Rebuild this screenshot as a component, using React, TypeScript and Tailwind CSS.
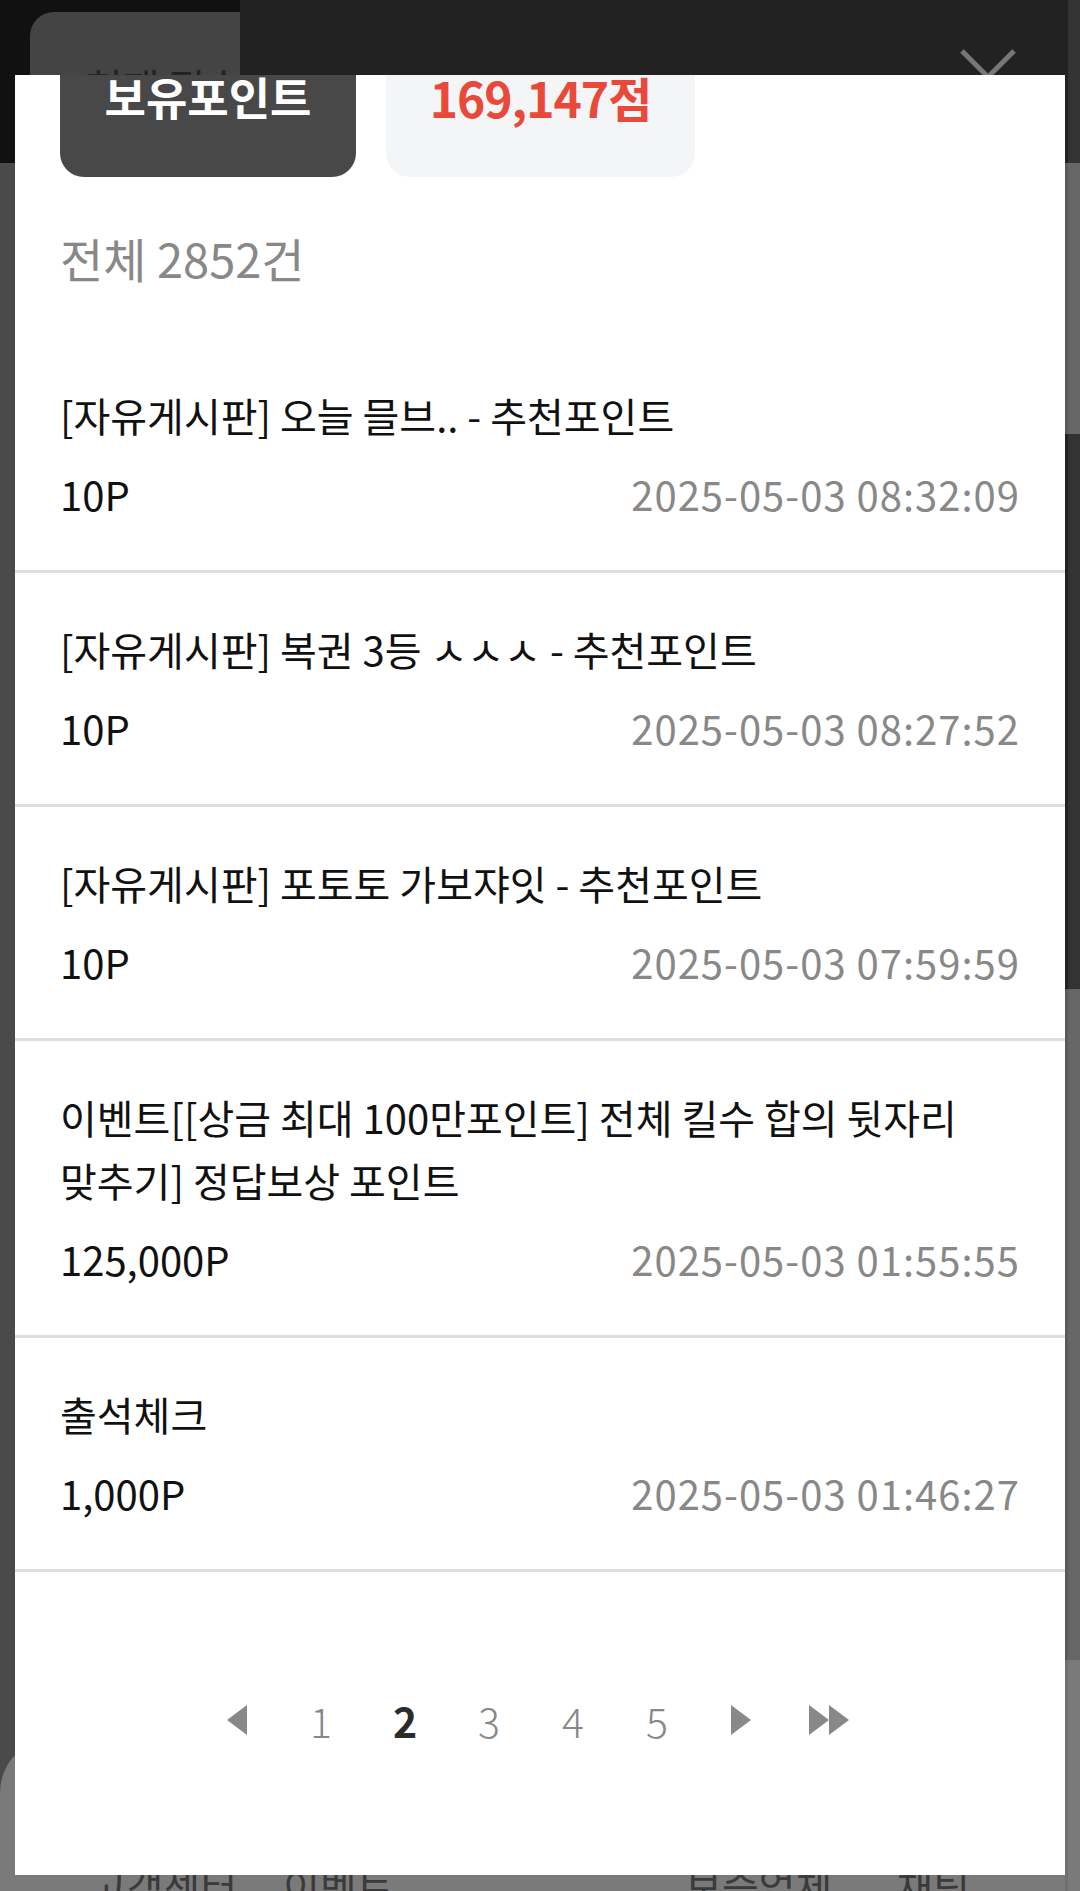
const rows: { title: string; point: string; date: string }[] = [
    {title: '[자유게시판] 오늘 믈브.. - 추천포인트', point: '10P', date: '2025-05-03 08:32:09'},
    {title: '[자유게시판] 복권 3등 ㅅㅅㅅ - 추천포인트', point: '10P', date: '2025-05-03 08:27:52'},
    {title: '[자유게시판] 포토토 가보쟈잇 - 추천포인트', point: '10P', date: '2025-05-03 07:59:59'},
    {title: '이벤트[[상금 최대 100만포인트] 전체 킬수 합의 뒷자리 맞추기] 정답보상 포인트', point: '125,000P', date: '2025-05-03 01:55:55'},
    {title: '출석체크', point: '1,000P', date: '2025-05-03 01:46:27'},
];

function Arrow({dir}: { dir: 'left' | 'right' }) {
    return (
        <svg width="20" height="30" viewBox="0 0 20 30">
            {dir === 'left'
                ? <polygon points="20,0 20,30 0,15" fill="#888"/>
                : <polygon points="0,0 0,30 20,15" fill="#888"/>}
        </svg>
    );
}

function Pagination() {
    return (
        <div className="flex items-center justify-center pr-[10px] h-[60px]">
            <button className="w-[84px] flex justify-center"><Arrow dir="left"/></button>
            {[1, 2, 3, 4, 5].map(n => (
                <button
                    key={n}
                    className={`w-[84px] text-center text-[41px] leading-[60px] ${n === 2 ? 'font-bold text-[#2b2b2b]' : 'font-light text-[#888]'}`}
                >
                    {n}
                </button>
            ))}
            <button className="w-[84px] flex justify-center"><Arrow dir="right"/></button>
            <button className="w-[92px] flex justify-center">
                <Arrow dir="right"/>
                <Arrow dir="right"/>
            </button>
        </div>
    );
}

export default function App() {
    return (
        <div className="relative w-[1080px] h-[1891px] overflow-hidden bg-[#4a4a4a] font-['Noto_Sans_CJK_KR','Noto_Sans',sans-serif]">
            <div className="flex h-full">
                {/* page behind the dialog */}
                <div className="flex-1 flex flex-col">
                    <div className="h-[163px] bg-[#111] pt-[12px] pl-[30px]">
                        <div className="w-[400px] h-[140px] rounded-[24px] bg-[#444] pl-[56px] pt-[44px]">
                            <span className="text-[40px] text-[#222]">현재 접속</span>
                        </div>
                    </div>
                    <div className="flex-1"/>
                    <div className="h-[154px] rounded-t-[56px] bg-[#7a7a7a] flex items-end">
                        <div className="flex w-full text-[40px] leading-[40px] text-[#3a3a3a] translate-y-[14px]">
                            <span className="ml-[90px]">고객센터</span>
                            <span className="ml-[46px]">이벤트</span>
                            <span className="ml-auto">보증업체</span>
                            <span className="ml-[64px] mr-[95px]">채팅</span>
                        </div>
                    </div>
                </div>
                {/* page scrollbar */}
                <div className="w-[15px] flex flex-col">
                    <div className="h-[163px] bg-[#333] border-l-[3px] border-[#222]"/>
                    <div className="h-[271px] bg-[#666] border-l-[3px] border-[#5a5a5a]"/>
                    <div className="h-[555px] bg-[#333] border-l-[3px] border-[#222]"/>
                    <div className="h-[671px] bg-[#666] border-l-[3px] border-[#5a5a5a]"/>
                    <div className="flex-1 bg-[#7a7a7a] border-l-[3px] border-[#707070]"/>
                </div>
            </div>

            {/* header bar over the page */}
            <div className="absolute left-[240px] top-0 w-[825px] h-[75px] bg-[#222]">
                <svg className="absolute left-[718px] top-[47px]" width="60" height="60" viewBox="0 0 60 60">
                    <path d="M4 4 L56 56 M56 4 L4 56" stroke="#777" strokeWidth="5"/>
                </svg>
            </div>

            {/* points dialog */}
            <div className="absolute left-[15px] top-[75px] w-[1050px] h-[1800px] overflow-hidden bg-white">
                <div className="-mt-[58px]">
                    <div className="flex gap-[30px] px-[45px]">
                        <div className="w-[296px] h-[160px] rounded-[24px] bg-[#484848] flex items-center justify-center">
                            <span className="text-[45px] font-bold text-white">보유포인트</span>
                        </div>
                        <div className="w-[309px] h-[160px] rounded-[24px] bg-[#f4f5f7] flex items-center justify-center">
                            <span className="text-[48px] font-bold text-[#e8493a] tracking-[-1px]">169,147점</span>
                        </div>
                    </div>

                    <div className="px-[45px] pt-[56px] pb-[56px] text-[47px] leading-[50px] text-[#888]">
                        전체 2852건
                    </div>

                    <ul>
                        {rows.map((row, i) => (
                            <li key={i} className="border-b-[3px] border-[#dedede] px-[45px] pt-[45px] pb-[44px]">
                                <p className="text-[40px] leading-[63px] text-[#111] break-keep">{row.title}</p>
                                <div className="mt-[16px] flex justify-between text-[40px] leading-[63px]">
                                    <span className="text-[#111]">{row.point}</span>
                                    <span className="text-[#888] tracking-[1px]">{row.date}</span>
                                </div>
                            </li>
                        ))}
                    </ul>

                    <div className="pt-[118px]">
                        <Pagination/>
                    </div>
                </div>
            </div>
        </div>
    );
}
